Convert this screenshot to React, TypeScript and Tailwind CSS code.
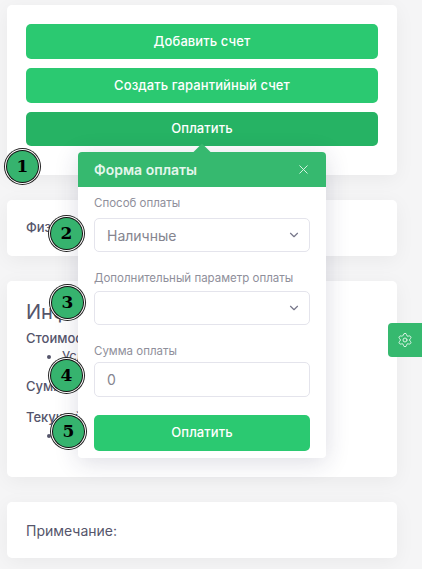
import React from 'react';
import { ChevronDown, Settings, X } from 'lucide-react';

const font = 'font-["Inter","Noto_Sans",sans-serif]';

const Card = ({ className, children }: { className: string; children?: React.ReactNode }) => (
  <div className={`rounded-[5px] bg-white px-[19px] shadow-[0_4px_20px_rgba(0,0,0,0.05)] ${className}`}>{children}</div>
);

const Marker = ({ n, className }: { n: number; className: string }) => (
  <div
    className={`absolute flex h-[31px] w-[31px] items-center justify-center rounded-full bg-[#36b36e] font-["DejaVu_Serif",serif] text-[17px] font-bold text-black shadow-[0_0_0_1px_#111,0_0_0_2px_#fff,0_0_0_3px_#222] ${className}`}
  >
    {n}
  </div>
);

const Field = ({ label, value, select, gap, height }: { label: string; value?: string; select?: boolean; gap: string; height: string }) => (
  <div>
    <div className={`text-[11.5px] leading-[14px] text-[#8f8f9b] ${gap}`}>{label}</div>
    <div className={`flex items-center justify-between rounded-[5px] border border-[#e4e4ec] pl-[12px] pr-[8px] text-[14px] text-[#85858f] ${height}`}>
      <span>{value}</span>
      {select && <ChevronDown size={14} strokeWidth={2} className="text-[#77778a]" />}
    </div>
  </div>
);

const GreenButton = ({ children, className }: { children: React.ReactNode; className: string }) => (
  <button className={`flex w-full items-center justify-center rounded-[5px] text-[13px] font-medium tracking-[0.1px] text-white ${className}`}>
    {children}
  </button>
);

export default function App() {
  return (
    <div className={`relative h-[569px] w-[422px] overflow-hidden bg-[#f5f5f6] pl-[7px] pt-[5px] ${font}`}>
      <div className="flex w-[390px] flex-col gap-[25px]">
        <Card className="flex h-[170px] flex-col gap-[9px] pt-[19px]">
          <GreenButton className="h-[35px] bg-[#2bc971]">Добавить счет</GreenButton>
          <GreenButton className="h-[35px] bg-[#2bc971]">Создать гарантийный счет</GreenButton>
          <GreenButton className="h-[34px] bg-[#26b364]">Оплатить</GreenButton>
        </Card>

        <Card className="flex h-[56px] items-center">
          <span className="text-[13px] font-medium text-[#55556b]">Физическое лицо:</span>
        </Card>

        <Card className="h-[196px] pt-[19px] text-[13px] font-medium text-[#55556b]">
          <h3 className="text-[20px] font-normal leading-[24px]">Информация</h3>
          <div className="mt-[5px] leading-[18px]">Стоимость:</div>
          <ul className="list-disc pl-[36px] font-normal leading-[18px]">
            <li>Услуга</li>
          </ul>
          <div className="mt-[12px] leading-[18px]">Сумма:</div>
          <div className="mt-[13px] leading-[18px]">Текущий:</div>
          <ul className="list-disc pl-[36px] font-normal leading-[18px]">
            <li>Нет</li>
          </ul>
        </Card>

        <Card className="flex h-[56px] items-center">
          <span className="text-[14px] text-[#55556b]">Примечание:</span>
        </Card>
      </div>

      {/* всплывающая форма */}
      <div className="absolute left-[78px] top-[152px] w-[248px] rounded-[4px] bg-white shadow-[0_4px_24px_rgba(40,40,80,0.16)]">
        <div className="absolute left-[118px] top-[-6px] h-[12px] w-[12px] rotate-45 bg-[#36b96f]" />
        <div className="relative flex h-[35px] items-center justify-between rounded-t-[4px] bg-[#36b96f] pl-[16px] pr-[15px] text-white">
          <span className="text-[14px] font-semibold text-[#e4f6ec]">Форма оплаты</span>
          <X size={15} strokeWidth={1.5} className="text-[#dff5e8]" />
        </div>
        <div className="flex flex-col px-[16px] pt-[9px]">
          <Field label="Способ оплаты" value="Наличные" select gap="mb-[8px]" height="h-[34px]" />
          <div className="h-[19px]" />
          <Field label="Дополнительный параметр оплаты" select gap="mb-[6px]" height="h-[34px]" />
          <div className="h-[19px]" />
          <Field label="Сумма оплаты" value="0" gap="mb-[4px]" height="h-[35px]" />
          <GreenButton className="mb-[7px] mt-[18px] h-[36px] bg-[#2bc971]">Оплатить</GreenButton>
        </div>
      </div>

      <Marker n={1} className="left-[7px] top-[151px]" />
      <Marker n={2} className="left-[51px] top-[218px]" />
      <Marker n={3} className="left-[52px] top-[287px]" />
      <Marker n={4} className="left-[51px] top-[360px]" />
      <Marker n={5} className="left-[53px] top-[416px]" />

      <div className="absolute left-[388px] top-[323px] flex h-[34px] w-[34px] items-center justify-center rounded-l-[4px] bg-[#36b96f]">
        <Settings size={16} strokeWidth={1.5} className="text-[#d8f3e3]" />
      </div>
    </div>
  );
}
